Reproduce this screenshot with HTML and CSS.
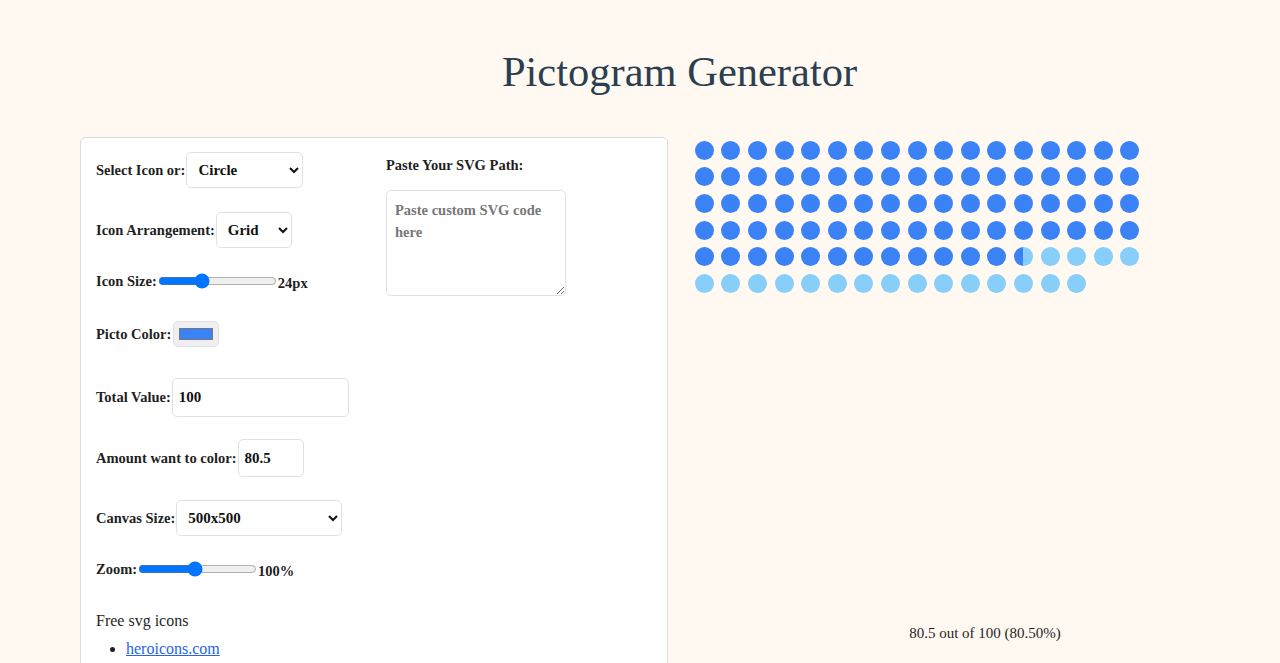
FILE: index.html
```html
<!DOCTYPE html>
<html lang="en">
<head>
<meta charset="utf-8">
<title>Pictogram Generator</title>
<link rel="stylesheet" href="styles.css">
</head>
<body>
<h1 class="title">Pictogram Generator</h1>
<main class="layout">
  <section class="card">
    <div class="col">
      <div class="form-group">
        <label class="label">Select Icon or:</label>
        <select class="control select select-icon"><option>Circle</option></select>
      </div>
      <div class="form-group">
        <label class="label">Icon Arrangement:</label>
        <select class="control select select-arr"><option>Grid</option></select>
      </div>
      <div class="form-group group-range">
        <label class="label">Icon Size:</label>
        <input class="range" type="range" min="10" max="50" value="24">
        <span class="value">24px</span>
      </div>
      <div class="form-group group-color">
        <label class="label">Picto Color:</label>
        <input class="color" type="color" value="#3b82f6">
      </div>
      <div class="form-group group-tight">
        <label class="label">Total Value:</label>
        <input class="control input input-total" type="text" value="100">
      </div>
      <div class="form-group group-snug">
        <label class="label">Amount want to color:</label>
        <input class="control input input-amount" type="text" value="80.5">
      </div>
      <div class="form-group">
        <label class="label">Canvas Size:</label>
        <select class="control select select-canvas"><option>500x500</option></select>
      </div>
      <div class="form-group group-range">
        <label class="label">Zoom:</label>
        <input class="range" type="range" min="10" max="200" value="100">
        <span class="value">100%</span>
      </div>
      <p class="note">Free svg icons</p>
      <ul class="links">
        <li><a href="#">heroicons.com</a></li>
      </ul>
    </div>
    <div class="col">
      <label class="label label-block">Paste Your SVG Path:</label>
      <textarea class="textarea" placeholder="Paste custom SVG code here"></textarea>
    </div>
  </section>
  <section class="preview">
    <div class="canvas">
      <div class="dots">
        <span class="dot on"></span><span class="dot on"></span><span class="dot on"></span><span class="dot on"></span><span class="dot on"></span><span class="dot on"></span><span class="dot on"></span><span class="dot on"></span><span class="dot on"></span><span class="dot on"></span>
        <span class="dot on"></span><span class="dot on"></span><span class="dot on"></span><span class="dot on"></span><span class="dot on"></span><span class="dot on"></span><span class="dot on"></span><span class="dot on"></span><span class="dot on"></span><span class="dot on"></span>
        <span class="dot on"></span><span class="dot on"></span><span class="dot on"></span><span class="dot on"></span><span class="dot on"></span><span class="dot on"></span><span class="dot on"></span><span class="dot on"></span><span class="dot on"></span><span class="dot on"></span>
        <span class="dot on"></span><span class="dot on"></span><span class="dot on"></span><span class="dot on"></span><span class="dot on"></span><span class="dot on"></span><span class="dot on"></span><span class="dot on"></span><span class="dot on"></span><span class="dot on"></span>
        <span class="dot on"></span><span class="dot on"></span><span class="dot on"></span><span class="dot on"></span><span class="dot on"></span><span class="dot on"></span><span class="dot on"></span><span class="dot on"></span><span class="dot on"></span><span class="dot on"></span>
        <span class="dot on"></span><span class="dot on"></span><span class="dot on"></span><span class="dot on"></span><span class="dot on"></span><span class="dot on"></span><span class="dot on"></span><span class="dot on"></span><span class="dot on"></span><span class="dot on"></span>
        <span class="dot on"></span><span class="dot on"></span><span class="dot on"></span><span class="dot on"></span><span class="dot on"></span><span class="dot on"></span><span class="dot on"></span><span class="dot on"></span><span class="dot on"></span><span class="dot on"></span>
        <span class="dot on"></span><span class="dot on"></span><span class="dot on"></span><span class="dot on"></span><span class="dot on"></span><span class="dot on"></span><span class="dot on"></span><span class="dot on"></span><span class="dot on"></span><span class="dot on"></span>
        <span class="dot half"></span>
        <span class="dot off"></span><span class="dot off"></span><span class="dot off"></span><span class="dot off"></span><span class="dot off"></span><span class="dot off"></span><span class="dot off"></span><span class="dot off"></span><span class="dot off"></span><span class="dot off"></span>
        <span class="dot off"></span><span class="dot off"></span><span class="dot off"></span><span class="dot off"></span><span class="dot off"></span><span class="dot off"></span><span class="dot off"></span><span class="dot off"></span><span class="dot off"></span>
      </div>
    </div>
    <p class="caption">80.5 out of 100 (80.50%)</p>
  </section>
</main>
</body>
</html>
```

FILE: styles.css
```css
* {
  box-sizing: border-box;
}

html, body {
  margin: 0;
  padding: 0;
}

body {
  background: #fff9f2;
  font-family: "Liberation Serif", "Times New Roman", serif;
  color: #1f1f1f;
}

.title {
  margin: 47px 0 40px;
  padding-left: 79px;
  font-size: 42.5px;
  line-height: 50px;
  font-weight: 400;
  color: #2c3e50;
  text-align: center;
}

.layout {
  display: flex;
  align-items: flex-start;
  gap: 23px;
  padding-left: 80px;
}

.card {
  width: 588px;
  flex: none;
  background: #ffffff;
  border: 1px solid #dcdcdc;
  border-radius: 5px;
  padding: 14px 15px 40px;
  display: grid;
  grid-template-columns: 279px 1fr;
  gap: 11px;
}

.form-group {
  display: flex;
  align-items: center;
  margin-bottom: 24px;
}

.group-tight {
  margin-bottom: 22px;
}

.group-snug {
  margin-bottom: 23px;
}

.group-range {
  height: 18px;
}

.group-color {
  height: 40px;
}

.label {
  font-size: 14.5px;
  font-weight: 700;
  color: #1f1f1f;
  margin-right: 1px;
  white-space: nowrap;
}

.label-block {
  display: block;
  margin-top: 5px;
  margin-bottom: 16px;
}

.control {
  font-family: "Liberation Serif", "Times New Roman", serif;
  font-size: 15px;
  font-weight: 700;
  color: #111;
  background: #fff;
  border: 1px solid #dfe1e5;
  border-radius: 5px;
  padding: 0 7px;
}

.select {
  height: 36px;
}

.select-icon { width: 117px; }
.select-arr { width: 76px; }
.select-canvas { width: 166px; }

.input {
  height: 39px;
  padding: 0 6px;
  outline: none;
}

.input-total { width: 177px; }
.input-amount { width: 66px; height: 38px; }

.range {
  width: 119px;
  margin: 0;
  height: 16px;
  accent-color: #0075ff;
}

.value {
  font-size: 14.5px;
  font-weight: 700;
  color: #1f1f1f;
  margin-left: 1px;
  position: relative;
  top: 2px;
}

.color {
  width: 46px;
  height: 26px;
  padding: 2px 3px;
  margin: 0 0 0 1px;
  border: 1px solid #e2e2e6;
  border-radius: 5px;
  background: #efeff2;
}

.note {
  margin: 31px 0 4px;
  font-size: 16px;
  line-height: 24px;
  color: #1f1f1f;
}

.links {
  margin: 0;
  padding-left: 30px;
  font-size: 16px;
  line-height: 24px;
}

.links a {
  color: #2563eb;
  text-decoration: underline;
}

.textarea {
  display: block;
  width: 180px;
  height: 106px;
  padding: 8px;
  border: 1px solid #dfe1e5;
  border-radius: 5px;
  font-family: "Liberation Serif", "Times New Roman", serif;
  font-size: 14.5px;
  font-weight: 700;
  line-height: 22px;
  resize: both;
}

.textarea::placeholder {
  color: #777;
}

.preview {
  width: 588px;
  flex: none;
}

.canvas {
  height: 484px;
}

.dots {
  display: grid;
  grid-template-columns: repeat(17, 26.6px);
  grid-auto-rows: 26.6px;
  place-items: center;
}

.dot {
  width: 19px;
  height: 19px;
  border-radius: 50%;
}

.on { background: #3b82f6; }
.off { background: #87cefa; }
.half { background: linear-gradient(to right, #3b82f6 50%, #87cefa 50%); }

.caption {
  margin: 0;
  text-align: center;
  font-size: 15px;
  line-height: 24px;
  color: #1f1f1f;
}
```
